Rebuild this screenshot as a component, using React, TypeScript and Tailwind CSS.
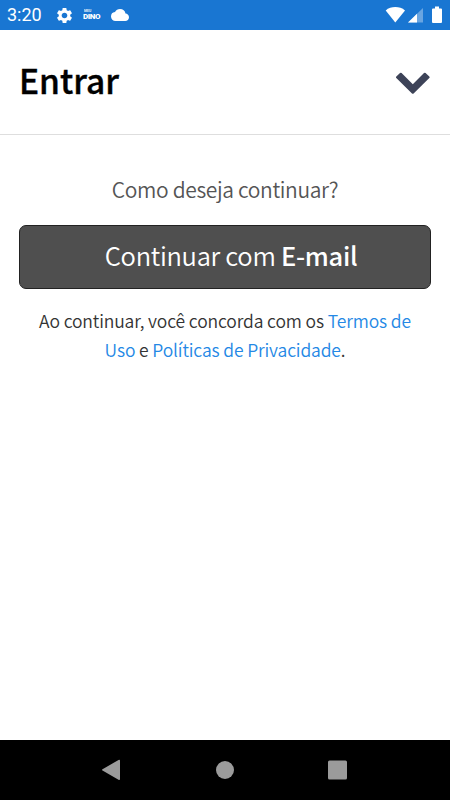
import { MdCloud, MdSettings } from "react-icons/md";

const StatusBar = () => (
  <div className="flex h-[30px] shrink-0 items-center justify-between bg-[#1976d2] text-white">
    <div className="flex items-center pl-[7px]">
      <span className="w-[35px] whitespace-nowrap font-[Roboto,sans-serif] text-[18px] leading-[32px]">3:20</span>
      <MdSettings className="ml-[13px] h-[19px] w-[19px]" />
      <span className="ml-[9px] flex w-[19px] flex-col font-[Roboto,sans-serif] font-black">
        <span className="h-[4px] pl-px text-[3.500px] leading-[4px] opacity-80">MEU</span>
        <span className="text-[8px] leading-[8px] tracking-[-0.4px]">DINO</span>
      </span>
      <MdCloud className="ml-[9px] h-[18px] w-[18px]" />
    </div>
    <svg className="h-[30px] w-[65px]" viewBox="385 0 65 30" fill="currentColor">
      <path d="M395.3 22.5 385.700 10.400C391 6 399.600 6 405 10.400Z" />
      <path d="M423 8v14.500h-15Z" opacity="0.35" />
      <path d="M417 13.800v8.700h-9Z" />
      <path d="M435 6.500h4v2h2q1 0 1 1V22q0 1-1 1h-8q-1 0-1-1V9.500q0-1 1-1h2Z" />
    </svg>
  </div>
);

const NavigationBar = () => (
  <nav className="flex h-[60px] shrink-0 items-center justify-center bg-black text-[#9b9b9b]">
    <svg className="h-[60px] w-[290px]" viewBox="80 740 290 60" fill="currentColor">
      <path d="M102.500 769.200 118.500 760q1.500-.7 1.500.8v18.200q0 1.500-1.500.8l-16-9.200q-1-.7 0-1.400Z" />
      <circle cx="225" cy="770" r="9" />
      <rect x="328" y="760.500" width="19" height="19" rx="1.500" />
    </svg>
  </nav>
);

const App = () => {
  return (
    <div className="flex h-screen flex-col bg-white font-['Noto_Sans_CJK_SC',sans-serif]">
      <StatusBar />

      {/* Header */}
      <header className="flex h-[105px] shrink-0 items-center justify-between border-b border-[#dedede] pr-[20px] pl-[19px]">
        <h1 className="pb-[5px] text-[33.5px] leading-[48px] font-medium text-black [-webkit-text-stroke:0.4px]">Entrar</h1>
        <button aria-label="Fechar">
          <svg className="h-[24px] w-[35px]" viewBox="395 70 35 24">
            <path
              d="m401.600 73 11.200 11.300L424 73q.8-.7 1.600 0l3.700 3.500q.7.800 0 1.600L413.600 93.500q-.8.700-1.600 0L396.300 78.100q-.7-.8 0-1.600L400 73q.8-.7 1.600 0Z"
              fill="#3d4358"
            />
          </svg>
        </button>
      </header>

      {/* Sign in options */}
      <main className="flex flex-1 flex-col px-[19px] pt-[39px] text-center">
        <p className="text-[21px] leading-[30px] font-[350] tracking-[-0.35px] text-[#555]">Como deseja continuar?</p>
        <button className="mt-[21px] h-[64px] shrink-0 rounded-[7px] border border-[#222] bg-[#4f4f4f] pb-[3px] pl-[12px] text-[25.500px] font-[350] tracking-[-0.3px] text-white">
          Continuar com <span className="font-medium">E-mail</span>
        </button>
        <p className="mt-[17px] px-[10px] text-[17.500px] leading-[29px] font-[350] tracking-[-0.13px] text-[#333]">
          Ao continuar, você concorda com os <a className="text-[#2488e5]">Termos de</a>
          <br />
          <a className="text-[#2488e5]">Uso</a> e <a className="text-[#2488e5]">Políticas de Privacidade</a>.
        </p>
      </main>

      <NavigationBar />
    </div>
  );
};

export default App;
